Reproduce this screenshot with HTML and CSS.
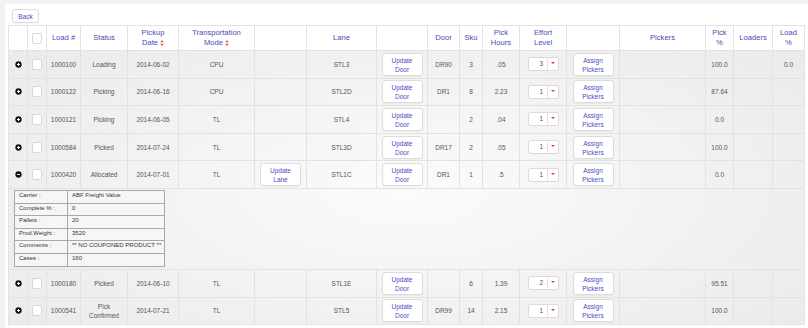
FILE: index.html
```html
<!DOCTYPE html>
<html lang="en">
<head>
    <meta charset="UTF-8">
    <title>Loads</title>
    <link rel="stylesheet" href="styles.css">
</head>
<body>
    <div class="panel">
        <div class="toolbar">
            <button class="btn back">Back</button>
        </div>

        <table class="loads">
            <colgroup>
                <col style="width:19px"><col style="width:19px"><col style="width:34px"><col style="width:47px">
                <col style="width:51px"><col style="width:76px"><col style="width:52px"><col style="width:70px">
                <col style="width:51px"><col style="width:32px"><col style="width:23px"><col style="width:37px">
                <col style="width:47px"><col style="width:53px"><col style="width:86px"><col style="width:28px">
                <col style="width:39px"><col style="width:32px">
            </colgroup>
            <thead>
                <tr>
                    <th></th>
                    <th><span class="check"></span></th>
                    <th>Load #</th>
                    <th>Status</th>
                    <th>Pickup<br>Date <svg class="sort" viewBox="0 0 5 8"><path d="M2.5 0 5 3H0zM2.5 8 0 5h5z"/></svg></th>
                    <th>Transportation<br>Mode <svg class="sort" viewBox="0 0 5 8"><path d="M2.5 0 5 3H0zM2.5 8 0 5h5z"/></svg></th>
                    <th></th>
                    <th>Lane</th>
                    <th></th>
                    <th>Door</th>
                    <th>Sku</th>
                    <th>Pick<br>Hours</th>
                    <th>Effort<br>Level</th>
                    <th></th>
                    <th>Pickers</th>
                    <th>Pick<br>%</th>
                    <th>Loaders</th>
                    <th>Load<br>%</th>
                </tr>
            </thead>
            <tbody>
                <tr class="row">
                    <td><svg class="toggle" viewBox="0 0 8 8"><circle cx="4" cy="4" r="3.6"/><path d="M2.3 4h3.4M4 2.3v3.4"/></svg></td>
                    <td><span class="check"></span></td>
                    <td>1000100</td><td>Loading</td><td>2014-06-02</td><td>CPU</td>
                    <td></td>
                    <td>STL3</td>
                    <td><button class="btn">Update<br>Door</button></td>
                    <td>DR90</td><td>3</td><td>.05</td>
                    <td><div class="sel"><span class="val">3</span><span class="arr"></span></div></td>
                    <td><button class="btn">Assign<br>Pickers</button></td>
                    <td></td><td>100.0</td><td></td><td>0.0</td>
                </tr>
                <tr class="row">
                    <td><svg class="toggle" viewBox="0 0 8 8"><circle cx="4" cy="4" r="3.6"/><path d="M2.3 4h3.4M4 2.3v3.4"/></svg></td>
                    <td><span class="check"></span></td>
                    <td>1000122</td><td>Picking</td><td>2014-06-16</td><td>CPU</td>
                    <td></td>
                    <td>STL2D</td>
                    <td><button class="btn">Update<br>Door</button></td>
                    <td>DR1</td><td>8</td><td>2.23</td>
                    <td><div class="sel"><span class="val">1</span><span class="arr"></span></div></td>
                    <td><button class="btn">Assign<br>Pickers</button></td>
                    <td></td><td>87.64</td><td></td><td></td>
                </tr>
                <tr class="row">
                    <td><svg class="toggle" viewBox="0 0 8 8"><circle cx="4" cy="4" r="3.6"/><path d="M2.3 4h3.4M4 2.3v3.4"/></svg></td>
                    <td><span class="check"></span></td>
                    <td>1000121</td><td>Picking</td><td>2014-06-05</td><td>TL</td>
                    <td></td>
                    <td>STL4</td>
                    <td><button class="btn">Update<br>Door</button></td>
                    <td></td><td>2</td><td>.04</td>
                    <td><div class="sel"><span class="val">1</span><span class="arr"></span></div></td>
                    <td><button class="btn">Assign<br>Pickers</button></td>
                    <td></td><td>0.0</td><td></td><td></td>
                </tr>
                <tr class="row">
                    <td><svg class="toggle" viewBox="0 0 8 8"><circle cx="4" cy="4" r="3.6"/><path d="M2.3 4h3.4M4 2.3v3.4"/></svg></td>
                    <td><span class="check"></span></td>
                    <td>1000584</td><td>Picked</td><td>2014-07-24</td><td>TL</td>
                    <td></td>
                    <td>STL3D</td>
                    <td><button class="btn">Update<br>Door</button></td>
                    <td>DR17</td><td>2</td><td>.05</td>
                    <td><div class="sel"><span class="val">1</span><span class="arr"></span></div></td>
                    <td><button class="btn">Assign<br>Pickers</button></td>
                    <td></td><td>100.0</td><td></td><td></td>
                </tr>
                <tr class="row">
                    <td><svg class="toggle" viewBox="0 0 8 8"><circle cx="4" cy="4" r="3.6"/><path d="M2.3 4h3.4"/></svg></td>
                    <td><span class="check"></span></td>
                    <td>1000420</td><td>Allocated</td><td>2014-07-01</td><td>TL</td>
                    <td><button class="btn">Update<br>Lane</button></td>
                    <td>STL1C</td>
                    <td><button class="btn">Update<br>Door</button></td>
                    <td>DR1</td><td>1</td><td>.5</td>
                    <td><div class="sel"><span class="val">1</span><span class="arr"></span></div></td>
                    <td><button class="btn">Assign<br>Pickers</button></td>
                    <td></td><td>0.0</td><td></td><td></td>
                </tr>
                <tr class="detail-row">
                    <td colspan="18">
                        <table class="detail">
                            <tr><td class="lbl">Carrier :</td><td>ABF Freight Value</td></tr>
                            <tr><td class="lbl">Complete % :</td><td>0</td></tr>
                            <tr><td class="lbl">Pallets :</td><td>20</td></tr>
                            <tr><td class="lbl">Prod.Weight :</td><td>3520</td></tr>
                            <tr><td class="lbl">Comments :</td><td>** NO COUPONED PRODUCT **</td></tr>
                            <tr><td class="lbl">Cases :</td><td>160</td></tr>
                        </table>
                    </td>
                </tr>
                <tr class="row">
                    <td><svg class="toggle" viewBox="0 0 8 8"><circle cx="4" cy="4" r="3.6"/><path d="M2.3 4h3.4M4 2.3v3.4"/></svg></td>
                    <td><span class="check"></span></td>
                    <td>1000180</td><td>Picked</td><td>2014-06-10</td><td>TL</td>
                    <td></td>
                    <td>STL1E</td>
                    <td><button class="btn">Update<br>Door</button></td>
                    <td></td><td>6</td><td>1.39</td>
                    <td><div class="sel"><span class="val">2</span><span class="arr"></span></div></td>
                    <td><button class="btn">Assign<br>Pickers</button></td>
                    <td></td><td>95.51</td><td></td><td></td>
                </tr>
                <tr class="row">
                    <td><svg class="toggle" viewBox="0 0 8 8"><circle cx="4" cy="4" r="3.6"/><path d="M2.3 4h3.4M4 2.3v3.4"/></svg></td>
                    <td><span class="check"></span></td>
                    <td>1000541</td><td>Pick<br>Confirmed</td><td>2014-07-21</td><td>TL</td>
                    <td></td>
                    <td>STL5</td>
                    <td><button class="btn">Update<br>Door</button></td>
                    <td>DR99</td><td>14</td><td>2.15</td>
                    <td><div class="sel"><span class="val">1</span><span class="arr"></span></div></td>
                    <td><button class="btn">Assign<br>Pickers</button></td>
                    <td></td><td>100.0</td><td></td><td></td>
                </tr>
            </tbody>
        </table>
    </div>
</body>
</html>
```

FILE: styles.css
```css
body { margin: 0; background: #f2f2f2; font-family: "Liberation Sans", Arial, sans-serif; color: #555; }
.panel { margin: 4px 0 0 5px; background: #fff; padding: 5px 4px 6px 3px; min-height: 318px; box-sizing: border-box; }
.toolbar { height: 16px; }

.btn { font-family: inherit; font-size: 6.5px; line-height: 9px; color: #4b4bc4; background: #fff; border: 1px solid #dcdcdc; border-radius: 3px; padding: 2px 0; box-shadow: 0 1px 1px rgba(0,0,0,0.04); }
.back { display: block; width: 27px; height: 14px; margin-left: 4px; padding: 0; }
.loads .btn { width: 41px; height: 23px; }

.loads { width: 796px; table-layout: fixed; border-collapse: collapse; border: 1px solid #dedede; background: radial-gradient(ellipse at 50% 55%, #fbfbfb 0%, #f1f1f1 55%, #e9e9e9 100%); }
.loads th { background: #fff; height: 24px; padding: 0 1px; font-weight: normal; font-size: 7.6px; line-height: 10px; color: #4a4ab8; border: 1px solid #e2e2e2; text-align: center; }
.loads .row td { height: 26.6px; padding: 0 1px; font-size: 6.5px; line-height: 9px; text-align: center; border: 1px solid #e2e2e2; color: #555; }
.sort { width: 4px; height: 6px; fill: #e8603e; vertical-align: -1px; }

.toggle { width: 7px; height: 7px; display: block; margin: 0 auto; }
.toggle circle { fill: #111; }
.toggle path { stroke: #fff; stroke-width: 1.1; }

.check { display: block; width: 8px; height: 9px; margin: 0 auto; background: #fff; border: 1px solid #d8d8d8; border-radius: 2px; }

.sel { display: flex; width: 29px; height: 12px; margin-left: 7px; background: #fff; border: 1px solid #dadada; border-radius: 2px; }
.sel .val { flex: 1; text-align: right; padding-right: 4px; line-height: 12px; color: #555; }
.sel .arr { width: 10px; border-left: 1px solid #e2e2e2; position: relative; }
.sel .arr::after { content: ""; position: absolute; left: 3px; top: 4px; border-left: 2px solid transparent; border-right: 2px solid transparent; border-top: 2px solid #e03a2a; }

.detail-row td { height: 79px; padding: 1px 0 0 5px; vertical-align: top; border: 1px solid #e2e2e2; }
.detail { border-collapse: collapse; table-layout: fixed; width: 151px; border: 1px solid #9a9a9a; background: #f6f6f6; }
.detail td { height: 11.6px; padding: 0 0 0 4px; border: 1px solid #a8a8a8; font-size: 6px; line-height: 8px; color: #333; text-align: left; white-space: nowrap; overflow: hidden; }
.detail .lbl { width: 48px; }
```
